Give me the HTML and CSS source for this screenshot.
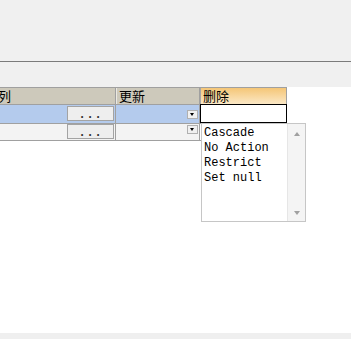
FILE: index.html
```html
<!DOCTYPE html>
<html lang="zh">
<head>
    <meta charset="UTF-8">
    <title>外键</title>
    <link rel="stylesheet" href="styles.css">
</head>
<body>
    <div class="toolbar"></div>
    <div class="band"></div>

    <div class="main">
        <div class="grid">
            <div class="row head">
                <div class="cell c1">列</div>
                <div class="cell c2">更新</div>
                <div class="cell c3 active">删除</div>
            </div>
            <div class="row r1 selected">
                <div class="cell c1"><span class="btn-more">...</span></div>
                <div class="cell c2"><span class="btn-drop"></span></div>
                <div class="cell c3 editing"></div>
            </div>
            <div class="row r2">
                <div class="cell c1"><span class="btn-more">...</span></div>
                <div class="cell c2"><span class="btn-drop"></span></div>
                <div class="cell c3"></div>
            </div>
        </div>

        <!-- lista aberta do combo "删除" -->
        <div class="droplist">
            <ul class="options">
                <li>Cascade</li>
                <li>No Action</li>
                <li>Restrict</li>
                <li>Set null</li>
            </ul>
            <div class="scrollbar">
                <span class="arrow up"></span>
                <span class="arrow down"></span>
            </div>
        </div>
    </div>

    <div class="status"></div>
</body>
</html>
```

FILE: styles.css
```css
body {
    margin: 0;
    width: 351px;
    height: 339px;
    overflow: hidden;
    background-color: #ffffff;
    font-family: "Noto Sans CJK SC", "Liberation Sans", sans-serif;
    font-size: 13px;
    color: #000;
    display: flex;
    flex-direction: column;
}

.toolbar {
    height: 61px;
    background-color: #f0f0f0;
    border-bottom: 1px solid #7b7b7b;
}

.band {
    height: 25px;
    background-color: #f0f0f0;
}

.main {
    flex: 1;
    position: relative;
}

.status {
    height: 6px;
    background-color: #efefef;
}

/* grade */
.grid {
    margin-left: -5px;
    width: 292px;
    border-top: 1px solid #a0a0a0;
}

.row {
    display: flex;
}

.cell {
    box-sizing: border-box;
    border-right: 1px solid #a0a0a0;
    border-bottom: 1px solid #a0a0a0;
    display: flex;
    justify-content: flex-end;
    align-items: flex-start;
}

.c1 { width: 121px; }
.c2 { width: 84px; }
.c3 { width: 87px; }

.head .cell {
    height: 17px;
    line-height: 16px;
    justify-content: flex-start;
    padding-left: 3px;
    background-color: #cdc9bb;
    box-shadow: inset 1px 0 0 #ebe9e2;
}

.head .active {
    background: linear-gradient(#f5c677, #fbe8c6);
    box-shadow: inset 1px 0 0 #a8a8a8;
}

.r1 .cell { height: 19px; }
.r2 .cell { height: 17px; }

.selected .c1,
.selected .c2 {
    background-color: #b4cbed;
}

.r2 .c1,
.r2 .c2 {
    background-color: #f3f3f3;
}

.r2 .c3 {
    background-color: #ffffff;
}

.editing {
    position: relative;
    background-color: #ffffff;
}

.editing::after {
    content: '';
    position: absolute;
    left: 0;
    top: -1px;
    width: 87px;
    height: 19px;
    box-sizing: border-box;
    border: 1px solid #000;
}

.btn-more {
    box-sizing: border-box;
    width: 47px;
    height: 15px;
    margin-right: 1px;
    overflow: hidden;
    background-color: #eeeeee;
    border: 1px solid #a3a3a3;
    font-family: "Liberation Mono", monospace;
    font-size: 12px;
    font-weight: bold;
    letter-spacing: 0.8px;
    line-height: 17px;
    text-align: center;
    color: #333;
}

.r1 .btn-more { margin-top: 1px; }

.btn-drop {
    box-sizing: border-box;
    width: 11px;
    height: 9px;
    margin-right: 1px;
    background-color: #f0f0f0;
    border: 1px solid #b0b0b0;
    position: relative;
}

.btn-drop::after {
    content: '';
    position: absolute;
    left: 2px;
    top: 2px;
    border-left: 2.5px solid transparent;
    border-right: 2.5px solid transparent;
    border-top: 3px solid #000;
}

.r1 .btn-drop { margin-top: 5px; }
.r2 .btn-drop { margin-top: 1px; }

/* lista suspensa */
.droplist {
    position: absolute;
    left: 201px;
    top: 36px;
    width: 105px;
    height: 99px;
    box-sizing: border-box;
    border: 1px solid #c6c6c6;
    background-color: #ffffff;
    display: flex;
}

.options {
    flex: 1;
    list-style: none;
    margin: 0;
    padding: 2px 0 0 2px;
    font-family: "Liberation Mono", monospace;
    font-size: 12px;
    line-height: 15px;
}

.scrollbar {
    width: 17px;
    background-color: #f4f4f4;
    border-left: 1px solid #e6e6e6;
    display: flex;
    flex-direction: column;
    justify-content: space-between;
    align-items: center;
    padding: 8px 0 6px;
}

.arrow {
    width: 0;
    height: 0;
    border-left: 3.5px solid transparent;
    border-right: 3.5px solid transparent;
}

.arrow.up { border-bottom: 4px solid #a0a0a0; }
.arrow.down { border-top: 4px solid #a0a0a0; }
```
